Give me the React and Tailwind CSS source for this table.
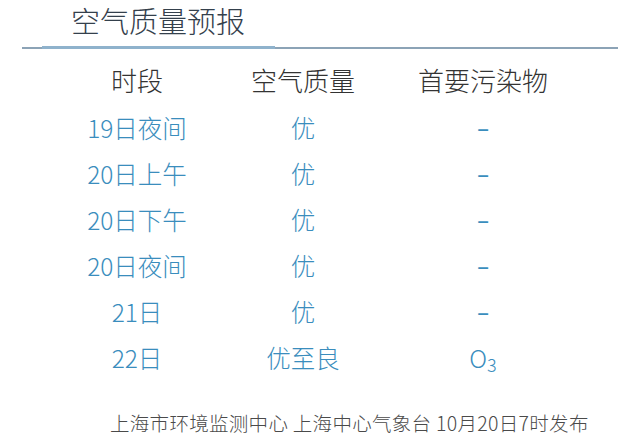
const ROWS = [
  { time: '19日夜间', quality: '优', pollutant: '–' },
  { time: '20日上午', quality: '优', pollutant: '–' },
  { time: '20日下午', quality: '优', pollutant: '–' },
  { time: '20日夜间', quality: '优', pollutant: '–' },
  { time: '21日', quality: '优', pollutant: '–' },
  { time: '22日', quality: '优至良', pollutant: 'O3' },
];

const font = { fontFamily: '"Noto Sans CJK SC", "Noto Sans", sans-serif' };

export default function App() {
  return (
    <div className="w-[640px] h-[442px] bg-white overflow-hidden" style={font}>
      {/* Title */}
      <div className="h-[46px] pl-[71px] pt-[4px]">
        <h1 className="text-[29px] leading-[32px] font-light text-[#34404c]">空气质量预报</h1>
      </div>

      {/* Divider */}
      <div className="relative mx-[22px] h-[3px]">
        <div className="absolute left-0 right-0 top-[1px] h-[2px] bg-[#8ca3b6]" />
        <div className="absolute left-[20px] w-[233px] top-0 h-[3px] bg-[#8fb2cc]" />
      </div>

      {/* Header */}
      <div className="grid grid-cols-[154px_178px_182px] pl-[60px] mt-[13px] text-[26px] leading-[36px] font-light text-[#333]">
        <div className="text-center">时段</div>
        <div className="text-center">空气质量</div>
        <div className="text-center">首要污染物</div>
      </div>

      {/* Rows */}
      <div className="flex flex-col pl-[60px] mt-[7px] text-[#3a8dbd] font-light">
        {ROWS.map((r) => (
          <div key={r.time} className="grid grid-cols-[154px_178px_182px] h-[46px] items-center text-[24.5px]">
            <div className="text-center">{r.time}</div>
            <div className="text-center">{r.quality}</div>
            <div className="text-center">
              {r.pollutant === 'O3' ? (
                <span>O<sub className="text-[18px] relative top-[4px]">3</sub></span>
              ) : (
                <span className="font-normal" style={{ fontFamily: '"DejaVu Sans", sans-serif' }}>{r.pollutant}</span>
              )}
            </div>
          </div>
        ))}
      </div>

      {/* Footer */}
      <div className="pl-[110px] mt-[30px] text-[19.5px] leading-[24px] tracking-[0.3px] font-light text-[#4a4a4a]">
        上海市环境监测中心 上海中心气象台 10月20日7时发布
      </div>
    </div>
  );
}
